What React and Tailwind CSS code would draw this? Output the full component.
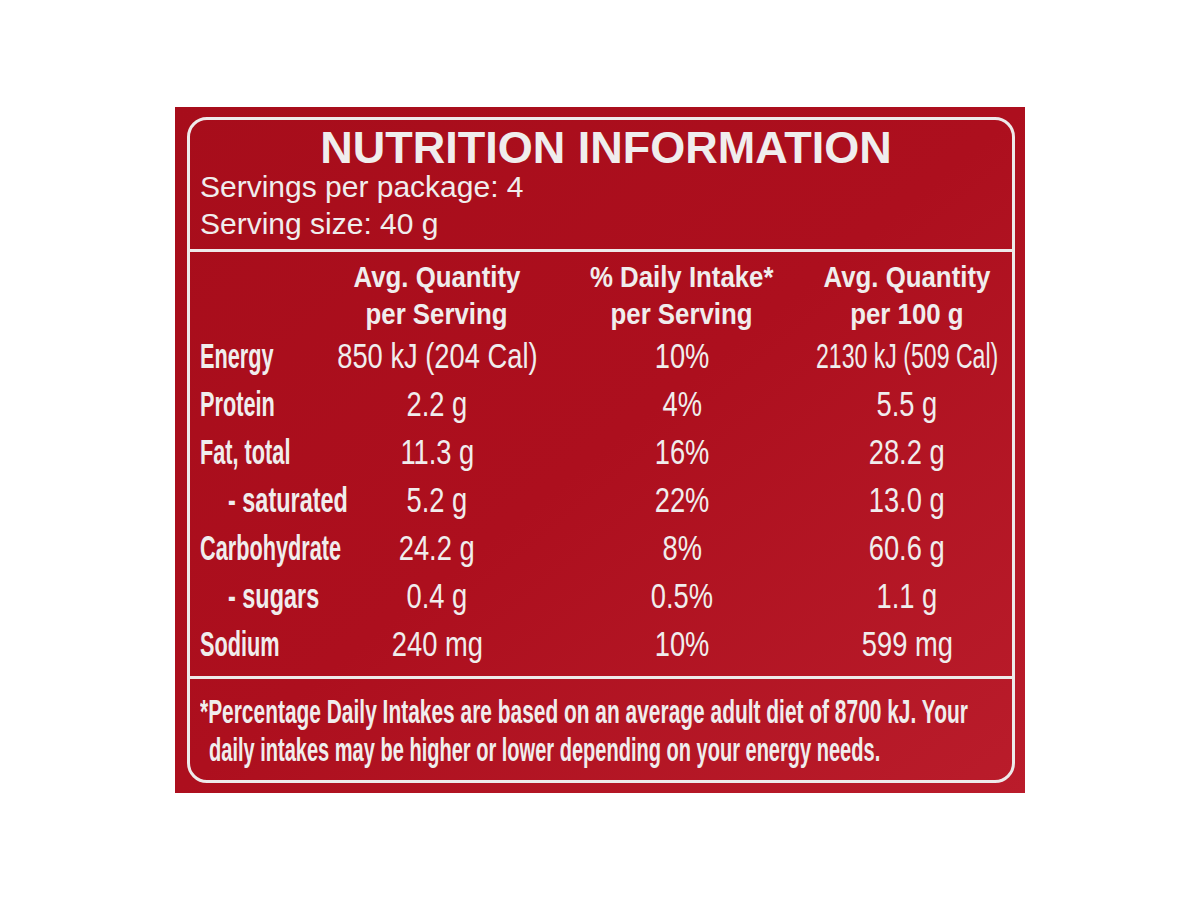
const rows = [
  { label: "Energy", serving: "850 kJ (204 Cal)", daily: "10%", per100: "2130 kJ (509 Cal)", tight: true },
  { label: "Protein", serving: "2.2 g", daily: "4%", per100: "5.5 g" },
  { label: "Fat, total", serving: "11.3 g", daily: "16%", per100: "28.2 g" },
  { label: "- saturated", serving: "5.2 g", daily: "22%", per100: "13.0 g", sub: true },
  { label: "Carbohydrate", serving: "24.2 g", daily: "8%", per100: "60.6 g" },
  { label: "- sugars", serving: "0.4 g", daily: "0.5%", per100: "1.1 g", sub: true },
  { label: "Sodium", serving: "240 mg", daily: "10%", per100: "599 mg" },
];

// the label is printed in a condensed face, so the Arial-width font is squeezed with scale-x
const Value = ({ children, tight }) => (
  <div className="h-[48px] flex items-center justify-center whitespace-nowrap text-[35px]">
    <span className={`inline-block ${tight ? "scale-x-[0.66]" : "scale-x-[0.78]"}`}>{children}</span>
  </div>
);

const Head = ({ top, bottom }) => (
  <div className="flex flex-col items-center whitespace-nowrap text-[30px] leading-[37px] font-bold">
    <span className="inline-block scale-x-[0.86]">{top}</span>
    <span className="inline-block scale-x-[0.86]">{bottom}</span>
  </div>
);

const App = () => {
  return (
    <div className="w-full h-[900px] bg-white flex items-center justify-center overflow-hidden font-['Liberation_Sans',Arial,sans-serif]">
      <div className="w-[850px] h-[686px] bg-gradient-to-br from-[#a70d1b] via-[#ad0f1e] to-[#ba1c2b] pt-[10px] pb-[10px] pl-[12px] pr-[10px]">
        <div className="w-full h-full border-[3px] border-[#eeeaea] rounded-[20px] flex flex-col overflow-hidden text-[#f0eded]">
          {/* title + servings */}
          <div className="pl-[10px] pt-[8px] pb-[7px] border-b-[3px] border-[#eeeaea]">
            <h1 className="text-center text-[45px] leading-[40px] font-bold">NUTRITION INFORMATION</h1>
            <p className="text-[30px] leading-[37px]">Servings per package: 4</p>
            <p className="text-[30px] leading-[37px]">Serving size: 40 g</p>
          </div>

          {/* table */}
          <div className="pl-[10px] pt-[6px] pb-[8px] border-b-[3px] border-[#eeeaea] grid grid-cols-[135px_204px_286px_164px]">
            <div />
            <Head top="Avg. Quantity" bottom="per Serving" />
            <Head top="% Daily Intake*" bottom="per Serving" />
            <Head top="Avg. Quantity" bottom="per 100 g" />

            {rows.map((r, i) => (
              <div key={i} className="contents">
                <div
                  className={`h-[48px] flex items-center whitespace-nowrap text-[35px] font-bold ${
                    r.sub ? "pl-[28px]" : ""
                  }`}
                >
                  <span
                    className={`inline-block origin-left ${r.sub ? "scale-x-[0.67]" : "scale-x-[0.62]"}`}
                  >
                    {r.label}
                  </span>
                </div>
                <Value>{r.serving}</Value>
                <Value>{r.daily}</Value>
                <Value tight={r.tight}>{r.per100}</Value>
              </div>
            ))}
          </div>

          {/* footnote */}
          <div className="pl-[10px] pt-[14px] text-[33px] leading-[38px] font-bold whitespace-nowrap">
            <p>
              <span className="inline-block origin-left scale-x-[0.634]">
                *Percentage Daily Intakes are based on an average adult diet of 8700 kJ. Your
              </span>
            </p>
            <p className="pl-[9px]">
              <span className="inline-block origin-left scale-x-[0.607]">
                daily intakes may be higher or lower depending on your energy needs.
              </span>
            </p>
          </div>
        </div>
      </div>
    </div>
  );
};

export default App;
